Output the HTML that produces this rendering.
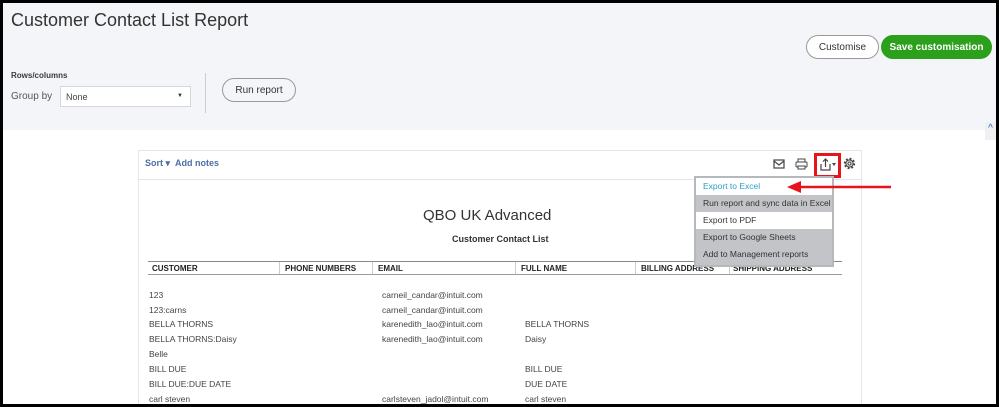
<!DOCTYPE html>
<html><head><style>
*{margin:0;padding:0;box-sizing:border-box}
body{width:999px;height:407px;overflow:hidden;background:#000;font-family:"Liberation Sans",sans-serif;position:relative}
.page{position:absolute;left:3px;top:3px;width:993px;height:401px;background:#fff;overflow:hidden}
.top{position:absolute;left:0;top:0;width:993px;height:127px;background:#f4f5f8}
.abs{position:absolute}
.t{white-space:nowrap}
.btn{display:flex;align-items:center;justify-content:center}
</style></head><body>
<div class="page">
<div class="top">
 <div class="abs t" style="left:8px;top:7px;font-size:18px;color:#333">Customer Contact List Report</div>
 <div class="abs t" style="left:8px;top:68px;font-size:8px;font-weight:bold;color:#393a3d">Rows/columns</div>
 <div class="abs t" style="left:8px;top:88px;font-size:10px;color:#555">Group by</div>
 <div class="abs" style="left:57px;top:83px;width:131px;height:21px;background:#fff;border:1px solid #d4d7dc"></div>
 <div class="abs t" style="left:63px;top:89px;font-size:9px;color:#444">None</div>
 <div class="abs t" style="left:174px;top:90px;font-size:6px;color:#333">▼</div>
 <div class="abs" style="left:202px;top:70px;width:1px;height:40px;background:#ccc"></div>
 <div class="abs btn" style="left:219px;top:75px;width:74px;height:24px;border:1px solid #999;border-radius:12px;background:#f4f5f8;font-size:10px;color:#333">Run report</div>
 <div class="abs btn" style="left:803px;top:32px;width:73px;height:24px;border:1px solid #999;border-radius:12px;background:#fff;font-size:10px;color:#333">Customise</div>
 <div class="abs btn" style="left:878px;top:32px;width:111px;height:24px;border-radius:12px;background:#2ca01c;font-size:10px;font-weight:bold;color:#fff">Save customisation</div>
</div>
<div class="abs" style="left:982px;top:119px;width:11px;height:18px;background:#eef0f4;color:#2b5ea8;font-size:10px;text-align:center;line-height:14px">^</div>
<div class="abs" style="left:135px;top:147px;width:724px;height:260px;border:1px solid #e3e6ea;background:#fff"></div>
<div class="abs" style="left:135px;top:176px;width:724px;height:1px;background:#e3e6ea"></div>
<div class="abs t" style="left:142px;top:155px;font-size:9px;font-weight:bold;color:#4a6fa5">Sort ▾ &nbsp;Add notes</div>
<svg class="abs" style="left:770px;top:156px" width="12" height="10"><rect x="1" y="1" width="10" height="8" fill="none" stroke="#444" stroke-width="1.2"/><path d="M1 2l5 4 5-4" fill="none" stroke="#444" stroke-width="1.2"/></svg>
<svg class="abs" style="left:792px;top:155px" width="13" height="12"><rect x="3" y="1" width="7" height="3" fill="none" stroke="#444"/><rect x="1" y="4" width="11" height="5" rx="1" fill="none" stroke="#444"/><rect x="3" y="8" width="7" height="3" fill="#fff" stroke="#444"/></svg>
<div class="abs" style="left:811px;top:150px;width:27px;height:25px;border:3px solid #e8141b"></div>
<svg class="abs" style="left:816px;top:155px" width="18" height="13"><path d="M2 6v6h9V6" fill="none" stroke="#444" stroke-width="1.2"/><path d="M6.5 9V1M4 3.5l2.5-2.5 2.5 2.5" fill="none" stroke="#444" stroke-width="1.2"/><path d="M13 5h4l-2 3z" fill="#444"/></svg>
<svg class="abs" style="left:840px;top:154px" width="13" height="13" viewBox="0 0 13 13"><circle cx="6.5" cy="6.5" r="4.6" fill="none" stroke="#444" stroke-width="2.2" stroke-dasharray="1.8 1.8"/><circle cx="6.5" cy="6.5" r="3.6" fill="#fff" stroke="#444" stroke-width="1.1"/><circle cx="6.5" cy="6.5" r="1.6" fill="none" stroke="#444" stroke-width="1.1"/></svg>
<div class="abs t" style="left:420px;top:204px;font-size:15px;color:#333">QBO UK Advanced</div>
<div class="abs t" style="left:449px;top:231px;font-size:9px;font-weight:bold;color:#333">Customer Contact List</div>
<div class="abs" style="left:145px;top:258px;width:694px;height:1px;background:#888"></div>
<div class="abs" style="left:145px;top:271px;width:694px;height:1px;background:#999"></div>
<div class="abs" style="left:276px;top:259px;width:1px;height:12px;background:#ccc"></div>
<div class="abs" style="left:369px;top:259px;width:1px;height:12px;background:#ccc"></div>
<div class="abs" style="left:512px;top:259px;width:1px;height:12px;background:#ccc"></div>
<div class="abs" style="left:632px;top:259px;width:1px;height:12px;background:#ccc"></div>
<div class="abs" style="left:726px;top:259px;width:1px;height:12px;background:#ccc"></div>
<div style="position:absolute;left:0;top:261px;font-size:8px;font-weight:bold;color:#222">
 <span class="abs t" style="left:149px">CUSTOMER</span><span class="abs t" style="left:282px">PHONE NUMBERS</span><span class="abs t" style="left:375px">EMAIL</span><span class="abs t" style="left:518px">FULL NAME</span><span class="abs t" style="left:638px">BILLING ADDRESS</span><span class="abs t" style="left:730px">SHIPPING ADDRESS</span>
</div>
<div style="position:absolute;left:0;top:0;font-size:8.5px;color:#444">
 <span class="abs t" style="left:146px;top:287px">123</span><span class="abs t" style="left:379px;top:287px">carneil_candar@intuit.com</span>
 <span class="abs t" style="left:146px;top:302px">123:carns</span><span class="abs t" style="left:379px;top:302px">carneil_candar@intuit.com</span>
 <span class="abs t" style="left:146px;top:316px">BELLA THORNS</span><span class="abs t" style="left:379px;top:316px">karenedith_lao@intuit.com</span><span class="abs t" style="left:522px;top:316px">BELLA THORNS</span>
 <span class="abs t" style="left:146px;top:331px">BELLA THORNS:Daisy</span><span class="abs t" style="left:379px;top:331px">karenedith_lao@intuit.com</span><span class="abs t" style="left:522px;top:331px">Daisy</span>
 <span class="abs t" style="left:146px;top:346px">Belle</span>
 <span class="abs t" style="left:146px;top:361px">BILL DUE</span><span class="abs t" style="left:522px;top:361px">BILL DUE</span>
 <span class="abs t" style="left:146px;top:376px">BILL DUE:DUE DATE</span><span class="abs t" style="left:522px;top:376px">DUE DATE</span>
 <span class="abs t" style="left:146px;top:391px">carl steven</span><span class="abs t" style="left:379px;top:391px">carlsteven_jadol@intuit.com</span><span class="abs t" style="left:522px;top:391px">carl steven</span>
</div>
<div class="abs" style="left:691px;top:173px;width:140px;height:91px;background:#fff;border:2px solid #b5b8bd;font-size:8.5px;color:#333">
 <div style="height:17px;line-height:17px;padding-left:7px;color:#2ca0c8">Export to Excel</div>
 <div style="height:17px;line-height:17px;padding-left:7px;background:#c2c4c8">Run report and sync data in Excel</div>
 <div style="height:17px;line-height:17px;padding-left:7px">Export to PDF</div>
 <div style="height:17px;line-height:17px;padding-left:7px;background:#c2c4c8">Export to Google Sheets</div>
 <div style="height:19px;line-height:17px;padding-left:7px;background:#c2c4c8">Add to Management reports</div>
</div>
<svg class="abs" style="left:780px;top:177px" width="110" height="14"><path d="M108 7H16" stroke="#e8141b" stroke-width="2.5"/><path d="M4 7l14-6v12z" fill="#e8141b"/></svg>
</div>
</body></html>
